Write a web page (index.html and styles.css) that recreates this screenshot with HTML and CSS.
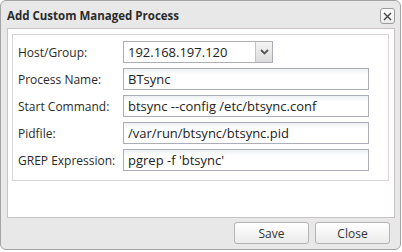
FILE: index.html
```html
<!DOCTYPE html>
<html lang="en">
<head>
  <meta charset="UTF-8">
  <title>Add Custom Managed Process</title>
  <link rel="stylesheet" href="styles.css">
</head>
<body>
  <div class="dialog">
    <div class="titlebar">
      <span class="title">Add Custom Managed Process</span>
      <button class="close-btn" title="Close">
        <svg width="11" height="11" viewBox="0 0 11 11"><path d="M2 2 L9 9 M9 2 L2 9" stroke="#444" stroke-width="1.4"/></svg>
      </button>
    </div>

    <div class="content">
      <div class="fieldset">
        <div class="form-row">
          <label>Host/Group:</label>
          <div class="select">
            <span class="select-value">192.168.197.120</span>
            <span class="select-arrow">
              <svg width="9" height="6" viewBox="0 0 9 6"><path d="M1 1 L4.5 4.5 L8 1" fill="none" stroke="#555" stroke-width="1.8"/></svg>
            </span>
          </div>
        </div>
        <div class="form-row">
          <label>Process Name:</label>
          <input type="text" class="text-input" value="BTsync">
        </div>
        <div class="form-row">
          <label>Start Command:</label>
          <input type="text" class="text-input" value="btsync --config /etc/btsync.conf">
        </div>
        <div class="form-row">
          <label>Pidfile:</label>
          <input type="text" class="text-input" value="/var/run/btsync/btsync.pid">
        </div>
        <div class="form-row">
          <label>GREP Expression:</label>
          <input type="text" class="text-input" value="pgrep -f 'btsync'">
        </div>
      </div>
    </div>

    <div class="buttons">
      <button class="btn">Save</button>
      <button class="btn">Close</button>
    </div>
  </div>
</body>
</html>
```

FILE: styles.css
```css
/* Base */
body {
  margin: 0;
  background: #fff;
  font-family: 'Open Sans', 'Noto Sans', sans-serif;
  font-size: 12px;
  color: #222;
}

/* Dialog frame */
.dialog {
  box-sizing: border-box;
  width: 401px;
  height: 250px;
  border: 1px solid #a4a4a4;
  border-radius: 6px;
  background: #e8e8e8;
  display: flex;
  flex-direction: column;
}

.titlebar {
  height: 27px;
  flex-shrink: 0;
  display: flex;
  align-items: center;
  justify-content: space-between;
  padding: 0 5px 0 6px;
}

.title {
  font-weight: bold;
  font-size: 11.5px;
  color: #2b2b2b;
  margin-top: 1px;
}

.close-btn {
  width: 15px;
  height: 16px;
  padding: 0;
  margin-top: 3px;
  border: 1px solid #9c9c9c;
  border-radius: 3px;
  background: linear-gradient(#fff, #ececec);
  display: flex;
  align-items: center;
  justify-content: center;
}

/* Content panel */
.content {
  height: 190px;
  flex-shrink: 0;
  margin: 0 5px 0 6px;
  background: #fff;
  border: 1px solid #c9c2c3;
  box-sizing: border-box;
  padding: 5px 5px 0 4px;
}

.fieldset {
  border: 1px solid #d6d6d6;
  padding: 6px 0 9px 5px;
  display: flex;
  flex-direction: column;
  gap: 5px;
}

.form-row {
  display: grid;
  grid-template-columns: 105px 246px;
  align-items: center;
  height: 22px;
}

.form-row label {
  color: #2a2a2a;
}

.text-input,
.select {
  box-sizing: border-box;
  height: 22px;
  border: 1px solid #abadb8;
  background: linear-gradient(#eef1f4, #fff 6px);
  font-family: inherit;
  font-size: 13px;
  color: #222;
  padding: 0 4px;
  margin: 0;
  outline: none;
}

.select {
  width: 150px;
  display: flex;
  align-items: center;
  justify-content: space-between;
  padding: 0 0 0 4px;
  background: #fff;
}

.select-arrow {
  width: 16px;
  height: 20px;
  border-left: 1px solid #c4c4c4;
  background: linear-gradient(#f4f4f4, #dcdcdc);
  display: flex;
  align-items: center;
  justify-content: center;
}

/* Footer buttons */
.buttons {
  display: flex;
  justify-content: flex-end;
  gap: 6px;
  padding: 4px 10px 0 0;
}

.btn {
  width: 75px;
  height: 22px;
  border: 1px solid #b4b4b4;
  border-radius: 3px;
  background: linear-gradient(#fff, #ebebeb);
  font-family: inherit;
  font-size: 12px;
  color: #333;
  padding: 0;
}
```
